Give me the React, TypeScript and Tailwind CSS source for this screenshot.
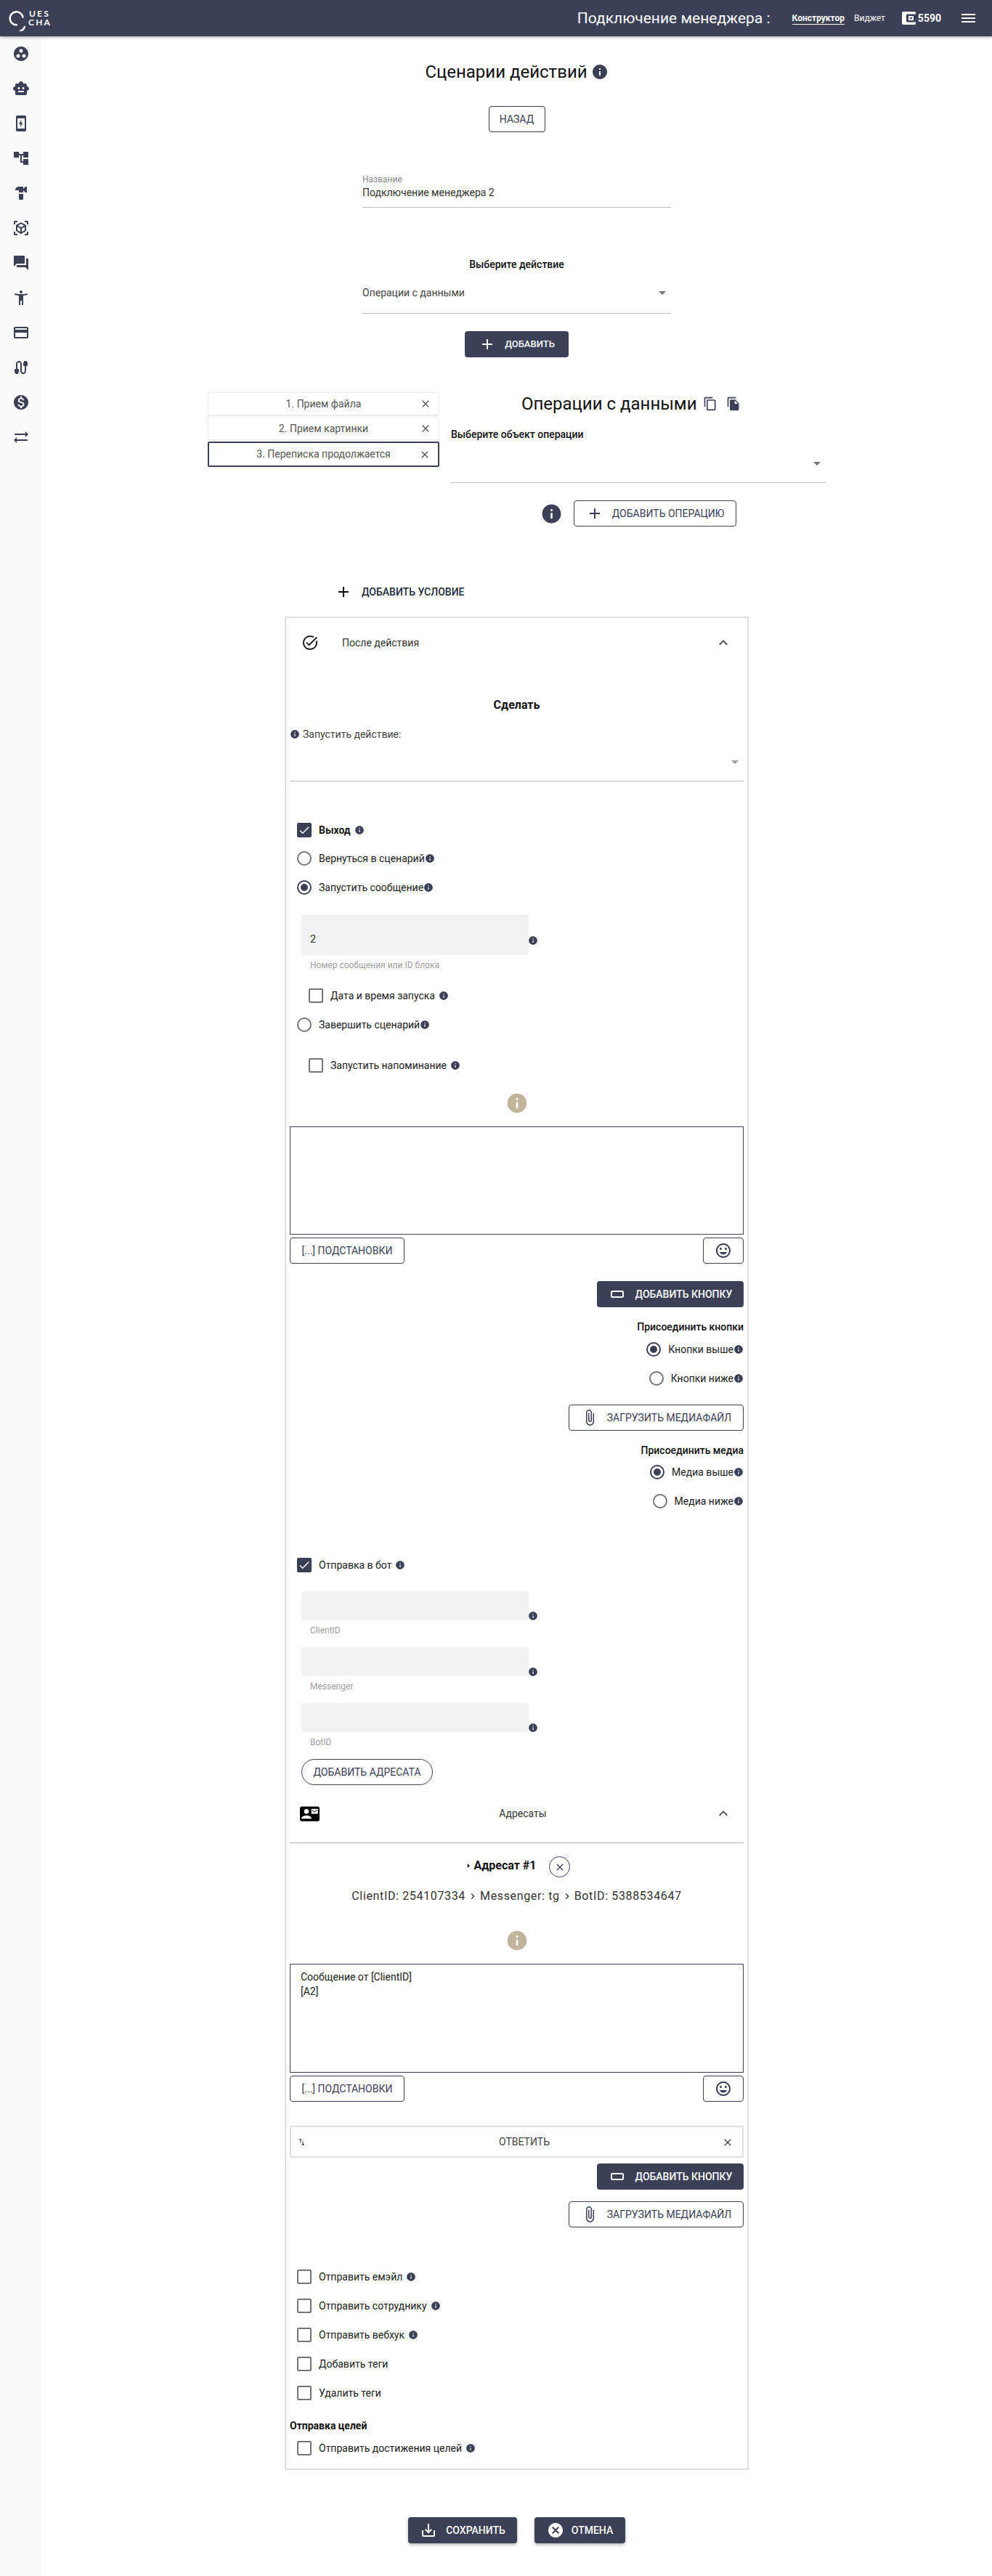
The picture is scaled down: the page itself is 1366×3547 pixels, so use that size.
import React from 'react';
import {
  MdGroupWork, MdSmartToy, MdAccountTree, MdHardware, MdViewInAr, MdForum, MdAccessibilityNew,
  MdCreditCard, MdCable, MdMonetizationOn, MdSyncAlt, MdInfo, MdContentCopy, MdFileCopy, MdClose,
  MdAdd, MdArrowDropDown, MdExpandLess, MdTaskAlt, MdOutlineInsertEmoticon, MdCrop169, MdAttachFile,
  MdContactMail, MdSaveAlt, MdCancel, MdSwapVert, MdChevronRight, MdArrowRight, MdCheck,
} from 'react-icons/md';

const PhoneBolt = () => (
  <svg width="24" height="24" viewBox="0 0 24 24" fill="currentColor">
    <path d="M17 1H7c-1.1 0-2 .9-2 2v18c0 1.1.9 2 2 2h10c1.1 0 2-.9 2-2V3c0-1.1-.9-2-2-2zm0 18H7V5h10v14z" />
    <path d="M11.2 17.5l3-6.5h-2V6.5l-3 6.5h2z" />
  </svg>
);

const sideIcons = [
  <MdGroupWork size={24} />, <MdSmartToy size={24} />, <PhoneBolt />, <MdAccountTree size={24} />,
  <MdHardware size={24} />, <MdViewInAr size={24} />, <MdForum size={24} />, <MdAccessibilityNew size={24} />,
  <MdCreditCard size={24} />, <MdCable size={24} />, <MdMonetizationOn size={24} />, <MdSyncAlt size={24} />,
];

const Logo = () => (
  <div className="flex items-center">
    <svg width="30" height="32" viewBox="0 0 30 32" fill="none" stroke="white" strokeWidth="2.6" className="ml-[11px] mt-[3px]">
      <path d="M17 21.6A9 9 0 1 1 19.6 8" strokeLinecap="round" transform="rotate(28 11 12)" />
      <path d="M18 27.5c2.5-.6 5-3 6-5.5" strokeLinecap="round" transform="translate(-1 4)" />
    </svg>
    <div className="-ml-[2px] text-[12px] font-bold leading-[12px] tracking-[2.2px] text-white font-[Lato,sans-serif]">
      <div className="ml-[1px]">UES</div>
      <div>CHA</div>
    </div>
  </div>
);

const Wallet = () => (
  <svg width="19" height="18" viewBox="0 0 19 18" className="block">
    <rect width="19" height="18" rx="2" fill="white" />
    <rect x="6" y="3.5" width="13" height="11" rx="1" fill="#3c4057" />
    <rect x="9" y="6" width="7" height="6" fill="white" />
    <rect x="11" y="8" width="3" height="2" fill="#3c4057" />
  </svg>
);

const Info = ({ size = 14, className = '' }: { size?: number; className?: string }) => (
  <MdInfo size={size} className={`shrink-0 text-[#3c4057] ${className}`} />
);

const OutlineBtn = ({ children, className = '' }: { children: React.ReactNode; className?: string }) => (
  <div className={`flex h-9 items-center justify-center rounded border border-[#3c4057] text-[14px] text-[#3c4057] ${className}`}>
    {children}
  </div>
);

const DarkBtn = ({ children, className = '' }: { children: React.ReactNode; className?: string }) => (
  <div className={`flex h-9 items-center justify-center rounded bg-[#3c4057] font-medium text-white ${className}`}>
    {children}
  </div>
);

const Checkbox = ({ checked = false }: { checked?: boolean }) =>
  checked ? (
    <span className="flex size-5 shrink-0 items-center justify-center rounded-[2px] bg-[#3c4057] text-white">
      <MdCheck size={18} />
    </span>
  ) : (
    <span className="size-5 shrink-0 rounded-[2px] border-2 border-[#757575]" />
  );

const Radio = ({ checked = false }: { checked?: boolean }) => (
  <span className={`flex size-5 shrink-0 items-center justify-center rounded-full border-2 ${checked ? 'border-[#3c4057]' : 'border-[#757575]'}`}>
    {checked && <span className="size-[10px] rounded-full bg-[#3c4057]" />}
  </span>
);

const CheckRow = ({ label, checked, bold, info = true, className = '' }: {
  label: string; checked?: boolean; bold?: boolean; info?: boolean; className?: string;
}) => (
  <div className={`flex h-10 items-center pl-[10px] ${className}`}>
    <Checkbox checked={checked} />
    <span className={`ml-[10px] text-[14px] text-[#1c1c1c] ${bold ? 'font-bold' : ''}`}>{label}</span>
    {info && <Info className="ml-[5px]" />}
  </div>
);

const RadioRow = ({ label, checked, className = '' }: { label: string; checked?: boolean; className?: string }) => (
  <div className={`flex h-10 items-center pl-[10px] ${className}`}>
    <Radio checked={checked} />
    <span className="ml-[10px] text-[14px] text-[#1c1c1c]">{label}</span>
    <Info />
  </div>
);

const RightRadio = ({ label, checked, className = '' }: { label: string; checked?: boolean; className?: string }) => (
  <div className={`flex h-10 items-center justify-end ${className}`}>
    <Radio checked={checked} />
    <span className="ml-[10px] text-[14px] text-[#1c1c1c]">{label}</span>
    <Info />
  </div>
);

const FilledInput = ({ helper, value, tall, className = '' }: { helper: string; value?: string; tall?: boolean; className?: string }) => (
  <div className={`pl-4 ${className}`}>
    <div className="flex items-start">
      <div className={`flex w-[313px] items-end rounded-t bg-[#f2f2f2] pl-3 text-[14px] text-[#333] ${tall ? 'h-14 pb-[11px]' : 'h-10'}`}>
        {value}
      </div>
      <Info className={`-ml-px ${tall ? 'mt-[29px]' : 'mt-[27px]'}`} />
    </div>
    <div className={`h-4 pl-3 text-[12px] leading-4 text-[#9e9e9e] ${tall ? 'mt-[6px]' : 'mt-[5px]'}`}>{helper}</div>
  </div>
);

const MessageTools = () => (
  <div className="mt-1 flex justify-between">
    <OutlineBtn className="w-[158px]">[...] ПОДСТАНОВКИ</OutlineBtn>
    <OutlineBtn className="w-14"><MdOutlineInsertEmoticon size={24} /></OutlineBtn>
  </div>
);

const AddButton = ({ className = '' }: { className?: string }) => (
  <div className={`flex justify-end ${className}`}>
    <DarkBtn className="w-[202px] text-[14px]">
      <MdCrop169 size={24} className="mr-[13px]" />
      <span>ДОБАВИТЬ КНОПКУ</span>
    </DarkBtn>
  </div>
);

const UploadButton = ({ className = '' }: { className?: string }) => (
  <div className={`flex justify-end ${className}`}>
    <OutlineBtn className="w-[241px]">
      <MdAttachFile size={24} className="mr-3" />
      <span>ЗАГРУЗИТЬ МЕДИАФАЙЛ</span>
    </OutlineBtn>
  </div>
);

const tabs = ['1. Прием файла', '2. Прием картинки', '3. Переписка продолжается'];

export default function App() {
  return (
    <div className="min-h-[3547px] bg-white font-[Roboto,sans-serif] text-[14px] text-[#111]">
      <header className="relative z-10 flex h-[50px] items-center bg-[#3c4057] text-white shadow-[0_1px_4px_rgba(0,0,0,0.4)]">
        <Logo />
        <div className="ml-auto flex items-center">
          <span className="text-[21px] leading-8">Подключение менеджера :</span>
          <span className="ml-[30px] border-b border-white text-[12px] font-bold leading-4">Конструктор</span>
          <span className="ml-[13px] text-[12px]">Виджет</span>
          <span className="ml-[23px]"><Wallet /></span>
          <span className="ml-[3px] text-[14px] font-bold">5590</span>
          <span className="ml-[28px] mr-[23px] flex w-[19px] flex-col gap-[3px]">
            <i className="h-[2px] bg-white" /><i className="h-[2px] bg-white" /><i className="h-[2px] bg-white" />
          </span>
        </div>
      </header>

      <div className="flex">
        <aside className="w-[57px] shrink-0 bg-[#fafafa] text-[#3c4057]">
          {sideIcons.map((icon, i) => (
            <div key={i} className="flex h-12 items-center justify-center">{icon}</div>
          ))}
        </aside>

        <main className="flex flex-1 flex-col items-center pb-[47px]">
          <div className="mt-[33px] flex h-8 items-center">
            <h1 className="text-[24px]">Сценарии действий</h1>
            <Info size={24} className="ml-[5px]" />
          </div>
          <OutlineBtn className="mt-[31px] w-[78px]">НАЗАД</OutlineBtn>

          <div className="mt-14 h-12 w-[425px] border-b border-[#bdbdbd]">
            <div className="h-[18px] text-[12px] leading-[18px] text-[#8a8a8a]">Название</div>
            <div className="h-[18px] text-[14px] leading-[18px] text-[#333]">Подключение менеджера 2</div>
          </div>

          <div className="mt-[68px] h-5 text-[14px] font-medium leading-5 text-[#111]">Выберите действие</div>
          <div className="flex h-[58px] w-[425px] items-center justify-between border-b border-[#bdbdbd] pt-px text-[14px] text-[#444]">
            <span>Операции с данными</span>
            <MdArrowDropDown size={24} className="text-[#757575]" />
          </div>

          <DarkBtn className="mt-6 w-[143px] text-[13px]">
            <MdAdd size={24} className="mr-3" />
            <span>ДОБАВИТЬ</span>
          </DarkBtn>

          <div className="mt-12 flex w-[851px] gap-4">
            <div className="flex w-[319px] flex-col">
              {tabs.map((t, i) => (
                <div
                  key={t}
                  className={`relative flex items-center justify-center rounded-[2px] text-[14px] text-[#555] ${
                    i === 2
                      ? 'h-[35px] border-2 border-[#3c4057]'
                      : 'mb-px h-[33px] border border-b-2 border-[#ebebeb]'
                  }`}
                >
                  {t}
                  <MdClose size={16} className="absolute right-[10px] text-[#555]" />
                </div>
              ))}
            </div>
            <div className="w-[516px]">
              <div className="flex h-8 items-center pl-[97px]">
                <h2 className="text-[24px]">Операции с данными</h2>
                <MdContentCopy size={20} className="ml-[8px] text-[#3c4057]" />
                <MdFileCopy size={20} className="ml-3 text-[#3c4057]" />
              </div>
              <div className="mt-4 h-5 text-[14px] font-medium leading-5">Выберите объект операции</div>
              <div className="flex h-[57px] items-center justify-end border-b border-[#bdbdbd] pt-[3px]">
                <MdArrowDropDown size={24} className="text-[#757575]" />
              </div>
              <div className="mt-6 flex items-center pl-[123px]">
                <Info size={31} />
                <OutlineBtn className="ml-[15px] w-[224px]">
                  <MdAdd size={24} className="mr-3" />
                  <span>ДОБАВИТЬ ОПЕРАЦИЮ</span>
                </OutlineBtn>
              </div>
            </div>
          </div>

          <div className="mt-[72px] flex h-9 w-[639px] items-center pl-[69px] text-[14px] font-medium text-[#1b2a3d]">
            <MdAdd size={24} className="mr-[13px] text-[#111]" />
            ДОБАВИТЬ УСЛОВИЕ
          </div>

          <section className="mt-4 w-[639px] border-2 border-[#e0e0e0] px-[5px] pb-2">
            <div className="flex h-[68px] items-center px-4">
              <MdTaskAlt size={24} className="text-[#222]" />
              <span className="ml-8 text-[14px] text-[#333]">После действия</span>
              <MdExpandLess size={24} className="ml-auto text-[#555]" />
            </div>

            <div className="mt-10 h-6 text-center text-[16px] font-bold leading-6">Сделать</div>
            <div className="mt-[18px] flex h-5 items-center text-[14px] text-[#444]">
              <Info />
              <span className="ml-1">Запустить действие:</span>
            </div>
            <div className="flex h-[55px] items-start justify-end border-b border-[#bdbdbd] pt-4">
              <MdArrowDropDown size={24} className="text-[#9e9e9e]" />
            </div>

            <CheckRow label="Выход" checked bold className="mt-[47px]" />
            <RadioRow label="Вернуться в сценарий" className="-mt-px" />
            <RadioRow label="Запустить сообщение" checked />
            <FilledInput tall value="2" helper="Номер сообщения или ID блока" className="mt-[17px]" />
            <CheckRow label="Дата и время запуска" className="mt-[14px] !pl-[26px]" />
            <RadioRow label="Завершить сценарий" />
            <CheckRow label="Запустить напоминание" className="mt-4 !pl-[26px]" />

            <div className="mt-4 flex justify-center"><MdInfo size={32} className="text-[#c2b59b]" /></div>
            <div className="mt-4 h-[149px] border border-[#3c4057]" />
            <MessageTools />

            <AddButton className="mt-6" />
            <div className="mt-[17px] h-5 text-right text-[14px] font-medium leading-5">Присоединить кнопки</div>
            <RightRadio label="Кнопки выше" checked className="mt-px" />
            <RightRadio label="Кнопки ниже" />
            <UploadButton className="mt-4" />
            <div className="mt-[17px] h-5 text-right text-[14px] font-medium leading-5">Присоединить медиа</div>
            <RightRadio label="Медиа выше" checked />
            <RightRadio label="Медиа ниже" />

            <CheckRow label="Отправка в бот" checked className="mt-12" />
            <FilledInput helper="ClientID" className="mt-4" />
            <FilledInput helper="Messenger" className="mt-[15px]" />
            <FilledInput helper="BotID" className="mt-[15px]" />
            <div className="ml-4 mt-[15px] flex h-9 w-[181px] items-center justify-center rounded-full border border-[#3c4057] text-[14px] text-[#3c4057]">
              ДОБАВИТЬ АДРЕСАТА
            </div>

            <div className="mt-[19px] flex h-10 items-center pl-[15px] pr-4">
              <MdContactMail size={27} className="-ml-px text-black" />
              <span className="flex-1 pl-4 text-center text-[14px] text-[#333]">Адресаты</span>
              <MdExpandLess size={24} className="text-[#555]" />
            </div>
            <div className="mt-5 border-t border-[#c2b59b]" />

            <div className="mt-[15px] flex h-8 items-center justify-center">
              <MdArrowRight size={14} className="text-[#111]" />
              <span className="ml-px text-[16px] font-bold">Адресат #1</span>
              <span className="ml-[18px] mt-[3px] flex size-[29px] items-center justify-center rounded-full border border-[#3c4057] text-[#3c4057]">
                <MdClose size={16} />
              </span>
            </div>
            <div className="mt-[14px] flex h-6 items-center justify-center text-[16px] tracking-[0.65px] text-[#333]">
              <span>ClientID: 254107334</span>
              <MdChevronRight size={16} className="mx-[2px]" />
              <span>Messenger: tg</span>
              <MdChevronRight size={16} className="mx-[2px]" />
              <span>BotID: 5388534647</span>
            </div>

            <div className="mt-[33px] flex justify-center"><MdInfo size={32} className="text-[#c2b59b]" /></div>
            <div className="mt-4 h-[150px] border border-[#3c4057] px-[14px] py-[7px] text-[14px] leading-5 text-[#222]">
              <div>Сообщение от [ClientID]</div>
              <div>[A2]</div>
            </div>
            <MessageTools />

            <div className="mt-[33px] flex h-11 items-center border-2 border-[#e0e0e0] pl-2 pr-3 text-[14px] text-[#444]">
              <MdSwapVert size={13} />
              <span className="flex-1 pl-7 text-center">ОТВЕТИТЬ</span>
              <MdClose size={16} className="mt-px" />
            </div>
            <AddButton className="mt-2" />
            <UploadButton className="mt-4" />

            <CheckRow label="Отправить емэйл" className="mt-12" />
            <CheckRow label="Отправить сотруднику" />
            <CheckRow label="Отправить вебхук" />
            <CheckRow label="Добавить теги" info={false} />
            <CheckRow label="Удалить теги" info={false} />
            <div className="mt-[15px] h-5 text-[14px] font-bold leading-5">Отправка целей</div>
            <CheckRow label="Отправить достижения целей" className="mt-px" />
          </section>

          <div className="mt-[65px] flex gap-6">
            <DarkBtn className="w-[150px] text-[14px] shadow-[0_2px_4px_rgba(0,0,0,0.3)]">
              <MdSaveAlt size={24} className="mr-3" />
              <span>СОХРАНИТЬ</span>
            </DarkBtn>
            <DarkBtn className="w-[125px] text-[14px] shadow-[0_2px_4px_rgba(0,0,0,0.3)]">
              <span className="relative mr-[10px] flex size-6 items-center justify-center">
                <MdCancel size={28} className="text-white" />
              </span>
              <span>ОТМЕНА</span>
            </DarkBtn>
          </div>
        </main>
      </div>
    </div>
  );
}
